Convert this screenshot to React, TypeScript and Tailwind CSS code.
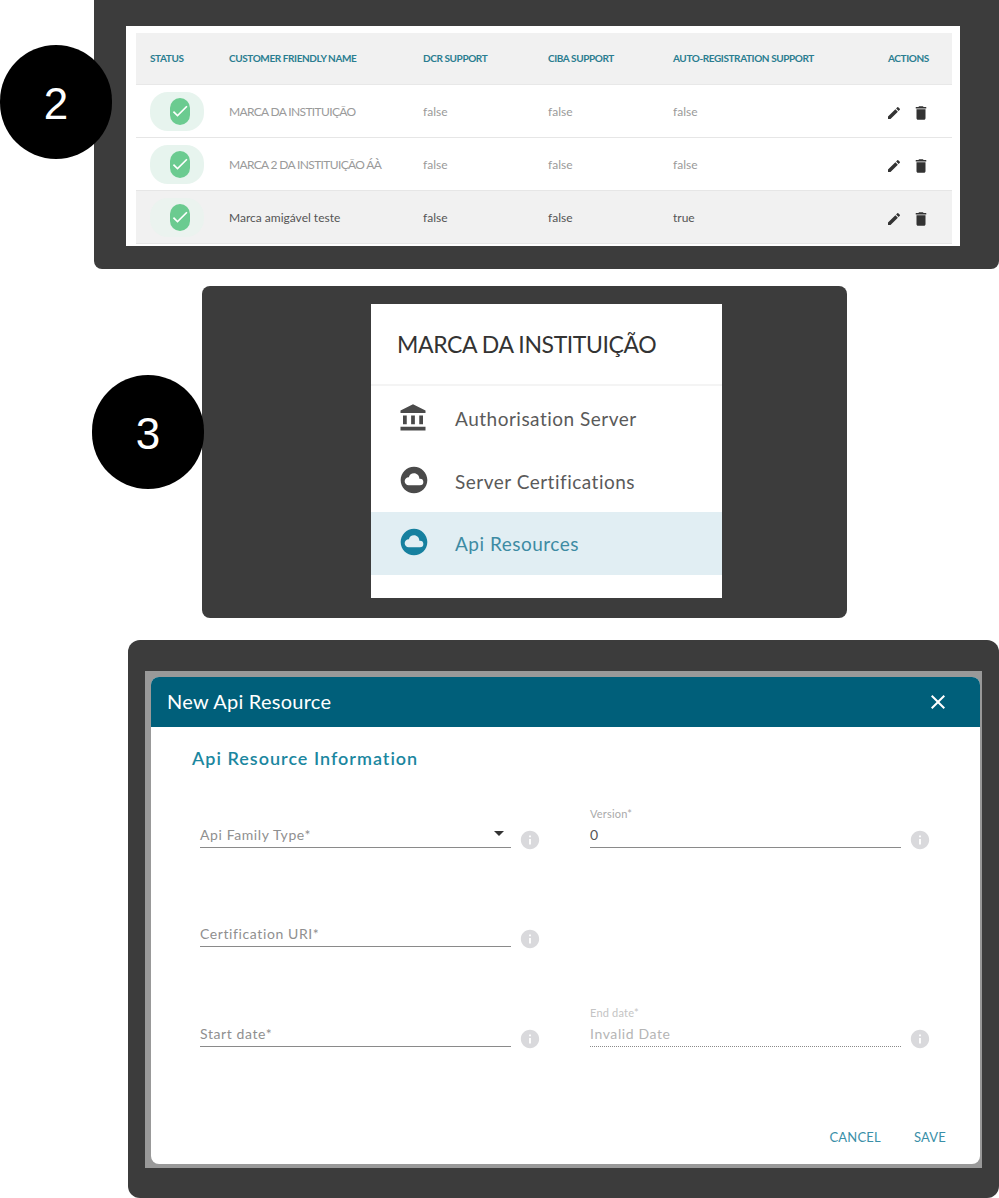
import { MdAccountBalance, MdCheck, MdClose, MdCloudCircle, MdDelete, MdEdit, MdInfo } from "react-icons/md";

const font = "font-['Lato','Noto_Sans',sans-serif]";

const rows = [
  { name: "MARCA DA INSTITUIÇÃO", auto: "false", active: false },
  { name: "MARCA 2 DA INSTITUIÇÃO ÁÀ", auto: "false", active: false },
  { name: "Marca amigável teste", auto: "true", active: true },
];

const columns = "grid grid-cols-[79px_194px_125px_125px_215px_1fr] items-center pl-[14px]";

function StepBadge({ n, className }: { n: string; className: string }) {
  return (
    <div className={`absolute flex h-[114px] w-[112px] items-center justify-center rounded-full bg-black pt-[3px] font-['Liberation_Sans',sans-serif] text-[44px] text-white ${className}`}>
      {n}
    </div>
  );
}

function BrandsTable() {
  return (
    <div className="ml-[94px] flex h-[269px] w-[905px] items-start rounded-b-lg bg-[#3c3c3c] pl-[32px] pt-[26px]">
      <div className="h-[220px] w-[834px] bg-white pl-[10px] pr-[8px] pt-[7px]">
        <div className={`${columns} h-[52px] border-b border-[#e8e8e8] bg-[#f1f1f1] text-[10px] font-bold tracking-[-0.4px] text-[#2a7d90]`}>
          <span>STATUS</span>
          <span>CUSTOMER FRIENDLY NAME</span>
          <span>DCR SUPPORT</span>
          <span>CIBA SUPPORT</span>
          <span>AUTO-REGISTRATION SUPPORT</span>
          <span>ACTIONS</span>
        </div>
        {rows.map((row) => (
          <div
            key={row.name}
            className={`${columns} h-[53px] border-b border-[#e6e6e6] text-[12px] ${row.active ? "bg-[#f1f1f1] text-[#555555]" : "bg-white text-[#9a9a9a]"}`}
          >
            <span className={`flex h-[39px] w-[54px] items-center justify-center rounded-[18px] ${row.active ? "bg-[#ebf3ef]" : "bg-[#e7f4ee]"}`}>
              <span className="ml-[6px] flex h-[27px] w-[20px] items-center justify-center rounded-full bg-[#6bcb90] text-white">
                <MdCheck size={20} />
              </span>
            </span>
            <span className={`pt-[1px] ${row.active ? "" : "tracking-[-0.65px]"}`}>{row.name}</span>
            <span className="pt-[1px]">false</span>
            <span className="pt-[1px]">false</span>
            <span className="pt-[1px]">{row.auto}</span>
            <span className="flex items-center gap-[10px] pt-[3px] text-[#333333]">
              <MdEdit size={16} className="ml-[-2px]" />
              <MdDelete size={18} />
            </span>
          </div>
        ))}
      </div>
    </div>
  );
}

function SideMenu() {
  const items = [
    { label: "Authorisation Server", icon: <MdAccountBalance size={30} />, selected: false },
    { label: "Server Certifications", icon: <MdCloudCircle size={32} className="mt-[-2px]" />, selected: false },
    { label: "Api Resources", icon: <MdCloudCircle size={32} className="mt-[-2px]" />, selected: true },
  ];
  return (
    <div className="relative ml-[202px] mt-[17px] h-[332px] w-[645px] rounded-lg bg-[#3c3c3c] pl-[169px] pt-[18px]">
      <StepBadge n="3" className="left-[-110px] top-[89px]" />
      <div className="h-[294px] w-[351px] bg-white">
        <div className="flex h-[82px] items-center border-b-2 border-[#f4f4f4] pl-[26px] text-[23px] tracking-[-0.4px] text-[#333333]">
          MARCA DA INSTITUIÇÃO
        </div>
        <div className="pt-[1px]">
          {items.map((item) => (
            <div
              key={item.label}
              className={`flex h-[62.5px] items-center pl-[27px] text-[19px] tracking-[0.5px] ${item.selected ? "bg-[#e1eef3] text-[#3d8ba3]" : "text-[#5a5a5a]"}`}
            >
              <span className={`flex w-[57px] ${item.selected ? "text-[#16809f]" : "text-[#4a4a4a]"}`}>{item.icon}</span>
              <span className="pt-[2px]">{item.label}</span>
            </div>
          ))}
        </div>
      </div>
    </div>
  );
}

function Field({ label, floating, value, dotted }: { label?: string; floating?: string; value?: string; dotted?: boolean }) {
  return (
    <div className="flex items-end">
      <div className={`flex h-[24px] w-[311px] items-center justify-between border-b pb-[2px] text-[14px] tracking-[0.6px] ${dotted ? "border-dotted border-[#8a8a8a]" : "border-[#8a8a8a]"}`}>
        <span className="relative">
          {floating && <span className={`absolute bottom-[23px] left-0 whitespace-nowrap text-[11px] tracking-[0.2px] ${dotted ? "text-[#c4c4c4]" : "text-[#aaaaaa]"}`}>{floating}</span>}
          <span className={value ? (dotted ? "text-[#b5b5b5]" : "text-[#555555]") : "text-[#8f8f8f]"}>{value ?? label}</span>
        </span>
        {label === "Api Family Type*" && <span className="mb-[3px] mr-[7px] h-0 w-0 border-x-[5px] border-t-[5px] border-x-transparent border-t-[#333333]" />}
      </div>
      <MdInfo size={22} className="mb-[-3px] ml-[8px] text-[#d9d9dc]" />
    </div>
  );
}

function NewResourceDialog() {
  return (
    <div className="ml-[128px] mt-[22px] h-[558px] w-[871px] rounded-xl bg-[#3c3c3c] pl-[17px] pt-[31px]">
      <div className="h-[497px] w-[837px] bg-[#999999] pb-[4px] pl-[6px] pr-[2px] pt-[6px]">
        <div className="flex h-[487px] flex-col overflow-hidden rounded-lg bg-white">
          <div className="flex h-[50px] shrink-0 items-center justify-between bg-[#005f7a] pl-[16px] pr-[30px] text-[20px] tracking-[0.25px] text-white">
            <span className="pb-[3px]">New Api Resource</span>
            <MdClose size={24} />
          </div>
          <div className="pl-[41px] pt-[18px] text-[18px] font-semibold tracking-[1px] text-[#1b87a0]">Api Resource Information</div>
          <div className="ml-[49px] grid grid-cols-[390px_340px]">
            <div className="flex h-[76px] items-end"><Field label="Api Family Type*" /></div>
            <div className="flex h-[76px] items-end"><Field floating="Version*" value="0" /></div>
            <div className="flex h-[99px] items-end"><Field label="Certification URI*" /></div>
            <div />
            <div className="flex h-[100px] items-end"><Field label="Start date*" /></div>
            <div className="flex h-[100px] items-end"><Field floating="End date*" value="Invalid Date" dotted /></div>
          </div>
          <div className="mt-auto flex justify-end gap-[33px] pb-[17px] pr-[34px] text-[13px] tracking-[0.2px] text-[#3a8fa8]">
            <span>CANCEL</span>
            <span>SAVE</span>
          </div>
        </div>
      </div>
    </div>
  );
}

export default function App() {
  return (
    <div className={`relative h-[1198px] w-[999px] overflow-hidden bg-white ${font}`}>
      <BrandsTable />
      <StepBadge n="2" className="left-0 top-[45px]" />
      <SideMenu />
      <NewResourceDialog />
    </div>
  );
}
